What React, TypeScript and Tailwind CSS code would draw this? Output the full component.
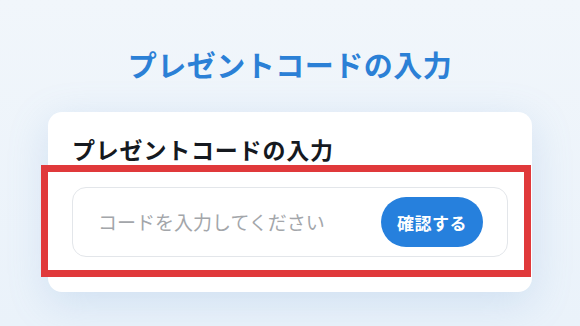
export default function App() {
  return (
    <div
      className="min-h-[326px] w-full bg-gradient-to-b from-[#f1f6fb] to-[#eaf2fa] flex flex-col items-center"
      style={{ fontFamily: '"Noto Sans CJK JP", "Noto Sans", sans-serif' }}
    >
      <h1 className="pt-[47px] text-[29px] leading-[1.2] font-bold text-[#2b80d6] tracking-[0.5px]">
        プレゼントコードの入力
      </h1>
      <div className="mt-[30px] w-[484px] rounded-[14px] bg-white px-6 pt-6 pb-[35px] shadow-[0_10px_40px_rgba(110,160,215,0.22)]">
        <h2 className="text-[23px] leading-[1.2] font-bold text-[#15191f] tracking-[0.8px]">
          プレゼントコードの入力
        </h2>
        <div className="relative mt-6">
          <div className="flex h-[70px] items-center justify-between rounded-[14px] border border-[#e3e6ea] bg-white pl-[25px] pr-6">
            <input
              className="flex-1 bg-transparent text-[19px] text-[#333] outline-none placeholder:text-[#a3a6aa]"
              placeholder="コードを入力してください"
            />
            <button className="h-[50px] w-[102px] rounded-full bg-[#2680dd] text-[17px] font-bold text-white tracking-[0.5px]">
              確認する
            </button>
          </div>
          <div className="pointer-events-none absolute -left-[31px] -right-[23px] -top-[22px] -bottom-[20px] border-[7px] border-[#e0393b]" />
        </div>
      </div>
    </div>
  );
}
